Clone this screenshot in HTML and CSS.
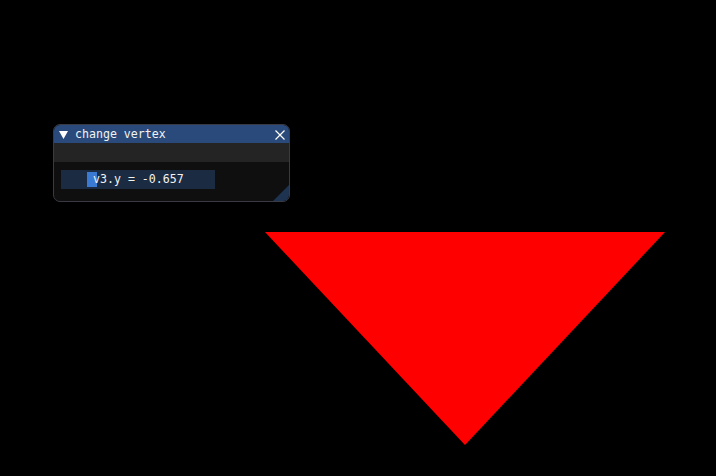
FILE: index.html
```html
<!DOCTYPE html>
<html>
<head>
<meta charset="utf-8">
<link rel="stylesheet" href="styles.css">
</head>
<body>
<svg class="canvas" width="716" height="476" viewBox="0 0 716 476">
  <polygon points="265,232 665,232 465,445" fill="#ff0000"/>
</svg>
<div class="win">
  <div class="title">
    <svg class="arrow" width="9" height="8" viewBox="0 0 9 8"><polygon points="0,0 9,0 4.5,8" fill="#fff"/></svg>
    <span class="title-text">change vertex</span>
    <svg class="close" width="10" height="10" viewBox="0 0 10 10"><path d="M0.5 0.5 L9.5 9.5 M9.5 0.5 L0.5 9.5" stroke="#fff" stroke-width="1.2"/></svg>
  </div>
  <div class="menubar"></div>
  <div class="content">
    <div class="frame">
      <span class="sel"></span>
      <span class="val">v3.y = -0.657</span>
    </div>
  </div>
  <div class="grip"></div>
</div>
</body>
</html>
```
FILE: styles.css
```css
html, body {
  margin: 0;
  padding: 0;
  background: #000;
  width: 716px;
  height: 476px;
  overflow: hidden;
}
.canvas {
  position: absolute;
  left: 0;
  top: 0;
}
.win {
  position: absolute;
  left: 53px;
  top: 124px;
  width: 235px;
  height: 76px;
  border: 1px solid #3a3a44;
  border-radius: 7px;
  background: #0f0f0f;
  overflow: hidden;
  display: flex;
  flex-direction: column;
  font-family: "DejaVu Sans Mono", "Liberation Mono", monospace;
  font-size: 11.6px;
  color: #f2f2f2;
}
.title {
  height: 18px;
  background: #294a7a;
  display: flex;
  align-items: center;
  padding-left: 5px;
  padding-right: 4px;
  flex: none;
}
.arrow {
  margin-right: 7px;
  margin-top: 1px;
}
.title-text {
  flex: 1;
  line-height: 18px;
}
.close {
  margin-top: 1px;
}
.menubar {
  height: 19px;
  background: #242424;
  flex: none;
}
.content {
  padding: 8px 0 0 7px;
}
.frame {
  width: 154px;
  height: 19px;
  background: #1b2b42;
  display: flex;
  align-items: center;
  position: relative;
}
.sel {
  position: absolute;
  left: 26px;
  top: 2px;
  width: 10px;
  height: 15px;
  background: #3b7ad2;
}
.val {
  position: relative;
  margin-left: 32px;
  line-height: 19px;
}
.grip {
  position: absolute;
  right: 0;
  bottom: 0;
  width: 0;
  height: 0;
  border-left: 16px solid transparent;
  border-bottom: 16px solid #1d3350;
}
```
